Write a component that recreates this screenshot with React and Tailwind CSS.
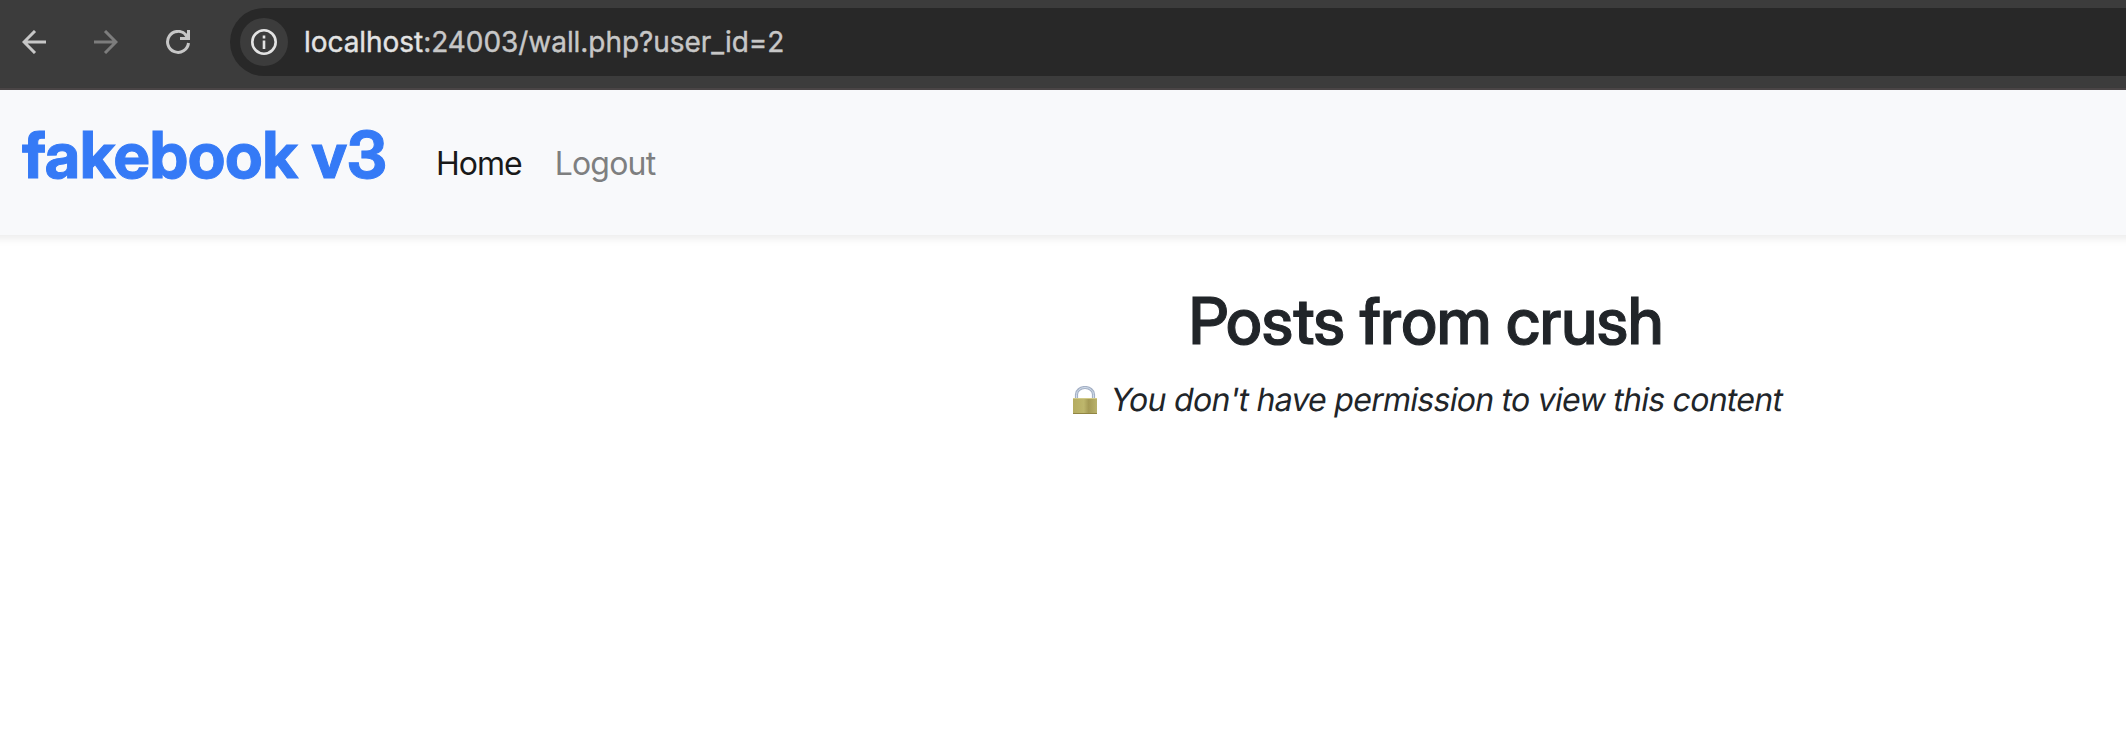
export default function App() {
  return (
    <div className="w-full h-[732px] overflow-hidden bg-white font-['Inter',sans-serif] text-[#212529]">
      <header className="flex h-[90px] items-start border-b-2 border-[#4b4647] bg-[#3c3c3c] pt-2">
        <div className="ml-[22px] flex h-[68px] items-center">
          <svg width="24" height="24" viewBox="0 0 24 24" fill="none" stroke="#c7c7c7" strokeWidth="3"><path d="M24 12H3M13 1 2 12l11 11" /></svg>
          <svg className="ml-12" width="24" height="24" viewBox="0 0 24 24" fill="none" stroke="#7d7d7d" strokeWidth="3"><path d="M0 12h21M11 1l11 11-11 11" /></svg>
          <svg className="ml-12" width="24" height="24" viewBox="0 0 24 24" fill="none" stroke="#c7c7c7" strokeWidth="3"><path d="M20 5A10.500 10.500 0 1 0 22.500 13M14 8.500H22.500V0M22 8l-3-4" /></svg>
        </div>
        <div className="ml-10 flex h-[68px] flex-1 items-center rounded-l-full bg-[#282828] pl-[10px]">
          <div className="flex size-12 items-center justify-center rounded-full bg-[#3c3c3c]">
            <svg width="26" height="26" viewBox="0 0 26 26" fill="none" stroke="#e3e3e3" strokeWidth="2.600"><circle cx="13" cy="13" r="11.700" /><path d="M13 11.500V20M13 6.500v3" /></svg>
          </div>
          <span className="ml-4 text-[28px] tracking-[-0.05px] [-webkit-text-stroke:0.4px] text-[#c7c7c7]"><span className="text-[#e3e3e3]">localhost</span>:24003/wall.php?user_id=2</span>
        </div>
      </header>
      <nav className="-mx-4 flex h-[145px] bg-[#f8f9fb] px-4 shadow-[0_4px_8px_rgba(0,0,0,0.075)]">
        <span className="ml-[22px] mt-[20px] w-[366px] whitespace-nowrap font-['Inter_Display','Inter',sans-serif] text-[64px] leading-[90px] font-bold tracking-[0.05px] text-[#357af6] [-webkit-text-stroke:1px]">fakebook v3</span>
        <span className="ml-12 mt-[50px] text-[32px] leading-[48px] tracking-[-1px] text-[#191919]">Home</span>
        <span className="ml-[33px] mt-[50px] text-[32px] leading-[48px] tracking-[-0.8px] text-[#7e7f80]">Logout</span>
      </nav>
      <main className="flex flex-col items-center pt-[47px] pl-[726px]">
        <h2 className="font-['Inter_Display','Inter',sans-serif] text-[64px] leading-[77px] font-medium tracking-[-0.3px] [-webkit-text-stroke:1px]">Posts from crush</h2>
        <div className="mt-[17px] ml-1 flex h-12 items-center">
          <svg className="mr-[14px]" width="24" height="28" viewBox="0 0 24 28">
            <defs>
              <linearGradient id="brass" x1="0" x2="1"><stop offset="0" stopColor="#b5ac60" /><stop offset="0.450" stopColor="#bdb66c" /><stop offset="0.650" stopColor="#a49a55" /><stop offset="1" stopColor="#b9b26c" /></linearGradient>
            </defs>
            <path d="M3.500 13V8.500a8.500 7 0 0 1 17 0V13" fill="none" stroke="#a4b0c5" strokeWidth="3.200" />
            <path d="M3.500 12V8.500a8.500 7 0 0 1 17 0V12" fill="none" stroke="#d1ddeb" strokeWidth="1" />
            <rect y="12" width="24" height="16" rx="0.500" fill="url(#brass)" />
            <path d="M0 12.500h24" stroke="#d2ca88" /><path d="M0 27.500h24" stroke="#918644" />
          </svg>
          <p className="-skew-x-[10deg] text-[32px] leading-[48px] tracking-[-0.72px]">You don't have permission to view this content</p>
        </div>
      </main>
    </div>
  );
}
